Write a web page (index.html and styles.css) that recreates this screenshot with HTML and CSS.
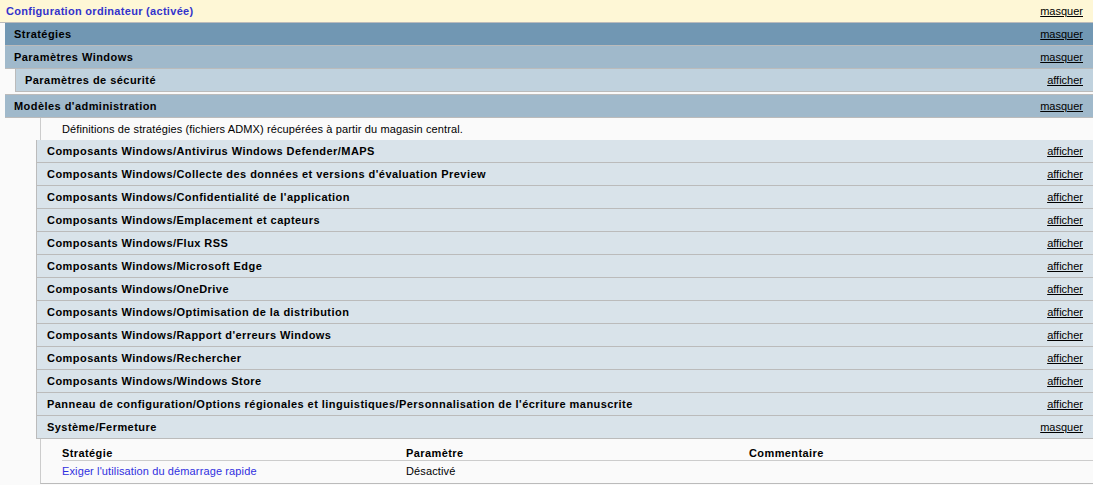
FILE: index.html
```html
<!DOCTYPE html>
<html lang="fr">
<head>
    <meta charset="UTF-8">
    <title>Rapport des stratégies</title>
    <link rel="stylesheet" href="styles.css">
</head>
<body>
    <div class="he0">
        <span class="title">Configuration ordinateur (activée)</span>
        <a class="toggle" href="#">masquer</a>
    </div>
    <div class="section">
        <div class="he1h">
            <span>Stratégies</span>
            <a class="toggle" href="#">masquer</a>
        </div>
        <div class="he1">
            <span>Paramètres Windows</span>
            <a class="toggle" href="#">masquer</a>
        </div>
        <div class="he2">
            <span>Paramètres de sécurité</span>
            <a class="toggle" href="#">afficher</a>
        </div>
        <div class="he1 top">
            <span>Modèles d'administration</span>
            <a class="toggle" href="#">masquer</a>
        </div>
        <div class="container">
            <div class="desc">Définitions de stratégies (fichiers ADMX) récupérées à partir du magasin central.</div>
        </div>
        <div class="group">
            <div class="he3"><span>Composants Windows/Antivirus Windows Defender/MAPS</span><a class="toggle" href="#">afficher</a></div>
            <div class="he3"><span>Composants Windows/Collecte des données et versions d'évaluation Preview</span><a class="toggle" href="#">afficher</a></div>
            <div class="he3"><span>Composants Windows/Confidentialité de l'application</span><a class="toggle" href="#">afficher</a></div>
            <div class="he3"><span>Composants Windows/Emplacement et capteurs</span><a class="toggle" href="#">afficher</a></div>
            <div class="he3"><span>Composants Windows/Flux RSS</span><a class="toggle" href="#">afficher</a></div>
            <div class="he3"><span>Composants Windows/Microsoft Edge</span><a class="toggle" href="#">afficher</a></div>
            <div class="he3"><span>Composants Windows/OneDrive</span><a class="toggle" href="#">afficher</a></div>
            <div class="he3"><span>Composants Windows/Optimisation de la distribution</span><a class="toggle" href="#">afficher</a></div>
            <div class="he3"><span>Composants Windows/Rapport d'erreurs Windows</span><a class="toggle" href="#">afficher</a></div>
            <div class="he3"><span>Composants Windows/Rechercher</span><a class="toggle" href="#">afficher</a></div>
            <div class="he3"><span>Composants Windows/Windows Store</span><a class="toggle" href="#">afficher</a></div>
            <div class="he3"><span>Panneau de configuration/Options régionales et linguistiques/Personnalisation de l'écriture manuscrite</span><a class="toggle" href="#">afficher</a></div>
            <div class="he3"><span>Système/Fermeture</span><a class="toggle" href="#">masquer</a></div>
            <div class="container4">
                <table class="info">
                    <tr>
                        <th class="c1">Stratégie</th>
                        <th class="c2">Paramètre</th>
                        <th>Commentaire</th>
                    </tr>
                    <tr>
                        <td><a class="policy" href="#">Exiger l'utilisation du démarrage rapide</a></td>
                        <td>Désactivé</td>
                        <td></td>
                    </tr>
                </table>
            </div>
        </div>
    </div>
</body>
</html>
```

FILE: styles.css
```css
body {
    margin: 0;
    background-color: #fafafa;
    font-family: "Liberation Sans", Arial, sans-serif;
    font-size: 11px;
    letter-spacing: 0.12px;
    color: #000000;
}

.toggle {
    color: #000000;
    font-weight: normal;
    letter-spacing: 0;
    text-decoration: underline;
}

.he0, .he1h, .he1, .he2, .he3 {
    display: flex;
    justify-content: space-between;
    align-items: center;
    height: 22px;
    padding-right: 10px;
    border-bottom: 1px solid #bbbbbb;
    font-weight: bold;
    letter-spacing: 0.45px;
}

.he0 {
    background-color: #fef7d6;
    padding-left: 6px;
}

.he0 .title {
    color: #3333cc;
    letter-spacing: 0.3px;
}

.section {
    margin-left: 5px;
}

.he1h {
    background-color: #7197b3;
    padding-left: 9px;
}

.he1 {
    background-color: #a0b9cb;
    padding-left: 9px;
}

.he1.top {
    border-top: 1px solid #bbbbbb;
    height: 21px;
    padding-bottom: 1px;
}

.he2 {
    background-color: #c0d2de;
    margin-left: 10px;
    margin-bottom: 2px;
    padding-left: 9px;
    padding-bottom: 1px;
    height: 21px;
    border-left: 1px solid #bbbbbb;
}

.container {
    margin-left: 35px;
    border-left: 1px solid #cccccc;
}

.desc {
    height: 22px;
    line-height: 22px;
    padding-left: 21px;
}

.group {
    margin-left: 31px;
}

.he3 {
    background-color: #d9e3ea;
    padding-left: 10px;
    border-left: 1px solid #bbbbbb;
}

.container4 {
    margin-left: 4px;
    border-left: 1px solid #cccccc;
    border-bottom: 1px solid #bbbbbb;
    padding-left: 21px;
}

.info {
    width: 100%;
    border-collapse: collapse;
}

.info th {
    text-align: left;
    font-weight: bold;
    letter-spacing: 0.4px;
    height: 13px;
    padding: 8px 0 0 0;
    vertical-align: top;
    border-bottom: 1px solid #cccccc;
}

.info td {
    height: 18px;
    padding: 4px 0 0 0;
    vertical-align: top;
}

.c1 {
    width: 344px;
}

.c2 {
    width: 343px;
}

.policy {
    color: #3030e0;
    text-decoration: none;
}
```
